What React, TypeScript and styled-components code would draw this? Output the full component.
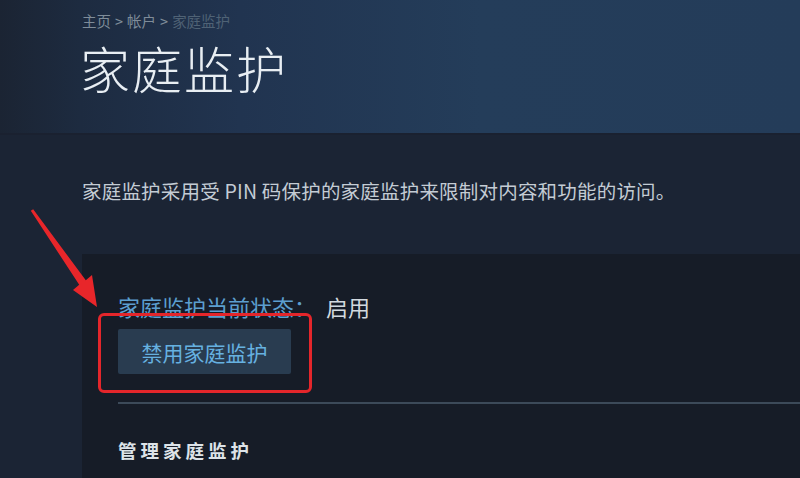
import styled, { createGlobalStyle } from "styled-components";

const GlobalStyle = createGlobalStyle`
  html, body {
    margin: 0;
    padding: 0;
    background: #1b2434;
  }
  body {
    font-family: "Noto Sans CJK SC", "Noto Sans", Arial, sans-serif;
    overflow: hidden;
  }
`;

const Page = styled.div`
  position: relative;
  width: 800px;
  height: 478px;
  display: flex;
  flex-direction: column;
  background: #1b2434;
  overflow: hidden;
`;

const Header = styled.header`
  height: 135px;
  box-sizing: border-box;
  padding: 10px 0 0 82px;
  background: linear-gradient(90deg, #1b2433 0%, #1d2b40 10%, #213450 30%, #243d5a 60%, #243c59 100%);
  border-bottom: 2px solid #1a2130;
`;

const Breadcrumbs = styled.div`
  display: flex;
  align-items: center;
  gap: 4px;
  font-size: 14.5px;
  line-height: 22px;
`;

const Crumb = styled.span<{ $current?: boolean }>`
  color: ${(p) => (p.$current ? "#4f6275" : "#7f8c99")};
`;

const Title = styled.h1`
  margin: 5px 0 0 -2px;
  font-size: 50px;
  font-weight: 300;
  line-height: 60px;
  letter-spacing: 2px;
  color: #e8eef3;
`;

const Content = styled.main`
  flex: 1;
  display: flex;
  flex-direction: column;
  padding-left: 82px;
`;

const Description = styled.p`
  margin: 44px 0 0;
  font-size: 19.5px;
  line-height: 24px;
  letter-spacing: 0.2px;
  color: #c4ccd4;
`;

const Panel = styled.section`
  flex: 1;
  margin-top: 51px;
  padding: 41px 0 0 36px;
  background: #161c27;
  display: flex;
  flex-direction: column;
`;

const StatusRow = styled.div`
  display: flex;
  gap: 10px;
  font-size: 22px;
  line-height: 22px;
`;

const StatusLabel = styled.span`
  color: #5c9fcf;
`;

const StatusValue = styled.span`
  color: #d2d9df;
`;

const Highlight = styled.div`
  align-self: flex-start;
  margin: -4px 0 0 -20px;
  padding: 13px 18px 16px 17px;
  border: 3px solid #e4262b;
  border-radius: 6px;
`;

const Button = styled.button`
  display: block;
  width: 173px;
  height: 45px;
  padding: 0;
  border: none;
  border-radius: 2px;
  background: #293c50;
  color: #66b1e0;
  font-family: inherit;
  font-size: 21px;
  cursor: pointer;
`;

const Divider = styled.hr`
  margin: 9px 0 0;
  border: none;
  height: 2px;
  background: #3c4a59;
`;

const SectionHeading = styled.h2`
  margin: 35px 0 0;
  font-size: 18.5px;
  font-weight: 700;
  line-height: 22px;
  letter-spacing: 4px;
  color: #dde3e8;
`;

const Arrow = styled.svg`
  position: absolute;
  left: 0;
  top: 0;
  pointer-events: none;
`;

export default function App() {
  return (
    <Page>
      <GlobalStyle />
      <Header>
        <Breadcrumbs>
          <Crumb>主页</Crumb>
          <Crumb>&gt;</Crumb>
          <Crumb>帐户</Crumb>
          <Crumb>&gt;</Crumb>
          <Crumb $current>家庭监护</Crumb>
        </Breadcrumbs>
        <Title>家庭监护</Title>
      </Header>
      <Content>
        <Description>家庭监护采用受 PIN 码保护的家庭监护来限制对内容和功能的访问。</Description>
        <Panel>
          <StatusRow>
            <StatusLabel>家庭监护当前状态：</StatusLabel>
            <StatusValue>启用</StatusValue>
          </StatusRow>
          <Highlight>
            <Button>禁用家庭监护</Button>
          </Highlight>
          <Divider />
          <SectionHeading>管理家庭监护</SectionHeading>
        </Panel>
      </Content>
      <Arrow width="800" height="478" viewBox="0 0 800 478">
        <polygon
          points="33.2,209.2 85.8,280.3 92,275 97,307 73,290 79.2,284.7 30.8,210.8"
          fill="#e8262a"
        />
      </Arrow>
    </Page>
  );
}
